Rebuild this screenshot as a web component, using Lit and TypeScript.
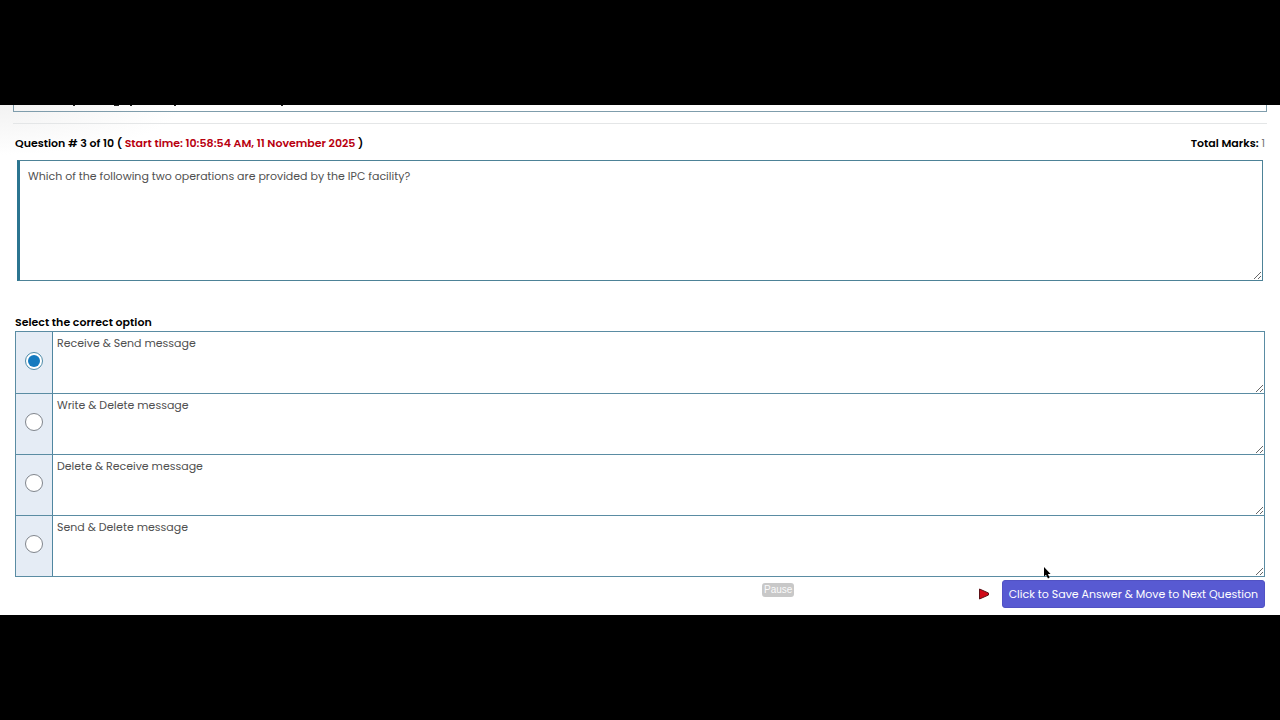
import { LitElement, html, css, svg } from "lit";
import { customElement, state } from "lit/decorators.js";

const OPTIONS = [
  "Receive & Send message",
  "Write & Delete message",
  "Delete & Receive message",
  "Send & Delete message",
];

/** Visible tails of the scrolled-away line: [x, width]. */
const TAILS: [number, number][] = [
  [59, 2],
  [100, 5],
  [116, 2],
  [160, 2],
  [267, 2],
];

@customElement("app-root")
export class AppRoot extends LitElement {
  @state() private selected = 0;

  static styles = css`
    :host {
      display: flex;
      flex-direction: column;
      justify-content: center;
      min-height: 100vh;
      background: #000;
      color: #000;
      font-family: Poppins, Inter, "Open Sans", sans-serif;
      font-size: 11px;
      line-height: 16px;
    }
    * {
      box-sizing: border-box;
    }
    main {
      position: relative;
      padding: 0 13px 7px;
      background: radial-gradient(ellipse 180px 50px at 0 0, #f2f2f2, #fff) #fff;
      overflow: hidden;
    }
    .previous {
      height: 7px;
      border: solid #a5bac4;
      border-width: 0 1px 1px;
      border-color: #7f9dac;
    }
    .tails {
      display: block;
    }
    hr {
      margin: 11px 0 0;
      border: 0;
      border-top: 1px solid #e4e6e7;
    }
    header {
      display: flex;
      justify-content: space-between;
      padding: 11px 2px 9px;
    }
    h1,
    h2 {
      margin: 0;
      font-size: 11px;
      font-weight: 600;
      line-height: 16px;
    }
    h1 span {
      color: #b8000f;
    }
    .marks {
      color: #777;
    }
    .marks b {
      color: #000;
      font-weight: 600;
    }
    textarea {
      display: block;
      width: 100%;
      margin: 0;
      border: 0;
      background: #fff;
      color: #505050;
      font: inherit;
      resize: vertical;
      outline: none;
    }
    .question {
      padding: 0 4px;
    }
    .question textarea {
      height: 121px;
      padding: 7px 8px;
      border: 1px solid #4d8297;
      border-left: 3px solid #2b7590;
    }
    h2 {
      margin-top: 33px;
      padding: 0 2px 1px;
    }
    .options {
      display: grid;
      grid-auto-rows: 61px;
      min-width: 0;
      margin: 0 2px;
      padding: 0;
      border: 1px solid #5a8ca3;
    }
    .option {
      display: grid;
      grid-template-columns: 37px 1fr;
    }
    .option + .option {
      border-top: 1px solid #5a8ca3;
    }
    .pick {
      display: grid;
      place-items: center;
      padding-bottom: 4px;
      border-right: 1px solid #4f86a0;
      background: #e5ecf5;
    }
    .pick input {
      display: grid;
      place-items: center;
      width: 18px;
      height: 18px;
      margin: 0;
      appearance: none;
      border: 1px solid #80858c;
      border-radius: 50%;
      background: #fff;
    }
    .pick input:checked {
      border-color: #4d8ba8;
    }
    .pick input:checked::before {
      content: "";
      width: 12px;
      height: 12px;
      border-radius: 50%;
      background: #147abf;
    }
    .option textarea {
      height: 100%;
      padding: 3px 4px;
    }
    footer {
      display: flex;
      justify-content: flex-end;
      align-items: center;
      gap: 12px;
      padding: 3px 2px 0;
    }
    .save {
      height: 28px;
      padding: 0 6px;
      border: 1px solid #5152c4;
      border-radius: 3px;
      background: #585ad2;
      color: #fff;
      font: inherit;
    }
    .pause {
      position: absolute;
      left: 762px;
      bottom: 18px;
      height: 14px;
      padding: 0 2px;
      border: 0;
      border-radius: 3px;
      background: #c8c8c8;
      color: #fafafa;
      font: 10px/14px "Liberation Sans", Arial, sans-serif;
    }
    .pointer {
      position: absolute;
      left: 1043px;
      bottom: 36px;
    }
  `;

  private renderOption(text: string, i: number) {
    return html`<div class="option">
      <label class="pick">
        <input
          type="radio"
          name="answer"
          aria-label=${text}
          .checked=${this.selected === i}
          @change=${() => (this.selected = i)}
        />
      </label>
      <textarea readonly aria-label="Option ${i + 1}" .value=${text}></textarea>
    </div>`;
  }

  render() {
    return html`<main>
      <div class="previous">
        <svg class="tails" width="300" height="1" aria-hidden="true">
          ${TAILS.map(([x, w]) => svg`<rect x=${x} y="0" width=${w} height="1" fill="#222" />`)}
        </svg>
      </div>
      <hr />
      <header>
        <h1>Question # 3 of 10 ( <span>Start time: 10:58:54 AM, 11 November 2025</span> )</h1>
        <div class="marks"><b>Total Marks:</b> 1</div>
      </header>
      <div class="question">
        <textarea
          readonly
          aria-label="Question"
          .value=${"Which of the following two operations are provided by the IPC facility?"}
        ></textarea>
      </div>
      <h2 id="choose">Select the correct option</h2>
      <fieldset class="options" aria-labelledby="choose">
        ${OPTIONS.map((text, i) => this.renderOption(text, i))}
      </fieldset>
      <footer>
        <svg width="12" height="12" viewBox="0 0 12 12" aria-hidden="true">
          <path d="M1.5 1 L10.5 5 V7 L1.5 11 Z" fill="#d00a18" stroke="#5e1218" stroke-width="1" stroke-linejoin="round" />
        </svg>
        <button class="save" type="button">Click to Save Answer &amp; Move to Next Question</button>
      </footer>
      <button class="pause" type="button">Pause</button>
      <svg class="pointer" width="8" height="13" viewBox="0 0 8 13" aria-hidden="true">
        <path d="M1 1 V10.5 L3 8.7 L5 12.6 L6.6 11.8 L4.9 8 H7.6 Z" fill="#000" />
      </svg>
    </main>`;
  }
}
